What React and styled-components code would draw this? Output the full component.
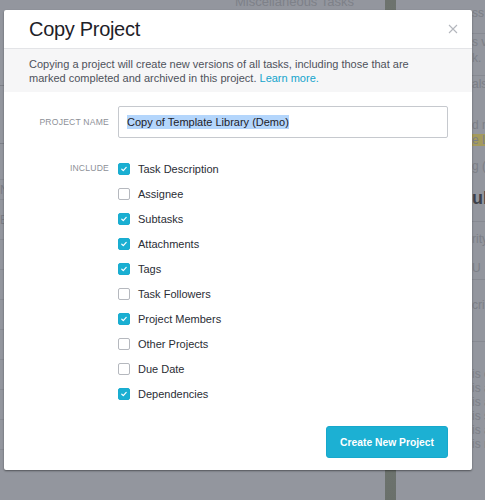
import React from "react";
import styled, { createGlobalStyle } from "styled-components";

const Global = createGlobalStyle`
  html, body { margin: 0; padding: 0; }
  body {
    width: 485px;
    height: 500px;
    overflow: hidden;
    background: #93969e;
    font-family: "Liberation Sans", Arial, sans-serif;
  }
`;

const Backdrop = styled.div`
  position: relative;
  width: 485px;
  height: 500px;
  display: flex;
  overflow: hidden;
  background: #93969e;
`;

const ListColumn = styled.div`
  width: 385px;
  flex-shrink: 0;
  display: flex;
  flex-direction: column;
`;

const ListHeader = styled.div`
  height: 86px;
  border-bottom: 1px solid #7d8088;
  padding: 0 0 0 235px;
  font-size: 13px;
  color: #7e8189;
  line-height: 16px;
  margin-top: -6px;
  box-sizing: border-box;
  height: 92px;
`;

const ListRow = styled.div`
  height: ${(p) => p.h}px;
  border-bottom: 1px solid ${(p) => (p.dark ? "#7d8088" : "#888b93")};
  box-sizing: border-box;
  font-size: 12px;
  color: #7a7d85;
  line-height: ${(p) => p.h}px;
`;

const Strip = styled.div`
  width: 11px;
  flex-shrink: 0;
  background: linear-gradient(180deg, #6d736e, #7a8079 60%, #6a706b);
`;

const SidePanel = styled.div`
  flex: 1;
  min-width: 0;
  overflow: hidden;
  display: flex;
  flex-direction: column;
  padding-left: 76px;
  font-size: 12px;
  color: #7c7f87;
`;

const SideLine = styled.div`
  flex-shrink: 0;
  height: ${(p) => p.h}px;
  line-height: ${(p) => p.h}px;
  box-sizing: border-box;
  white-space: nowrap;
  font-weight: ${(p) => (p.bold ? 700 : 400)};
  font-size: ${(p) => (p.big ? "18px" : "12px")};
  color: ${(p) => (p.bold ? "#3d4048" : "#7c7f87")};
  background: ${(p) => (p.badge ? "#a49a5c" : "transparent")};
  border-bottom: ${(p) => (p.rule ? "1px solid #878a92" : "none")};
  margin-left: ${(p) => (p.rule ? "-76px" : "0")};
  padding-left: ${(p) => (p.rule ? "76px" : "0")};
`;

const Modal = styled.div`
  position: absolute;
  left: 4px;
  top: 10px;
  width: 468px;
  background: #fff;
  border-radius: 2px;
  box-shadow: 0 1px 2px rgba(0, 0, 0, 0.45);
  display: flex;
  flex-direction: column;
`;

const Header = styled.div`
  height: 38px;
  border-bottom: 1px solid #e3e4e7;
  display: flex;
  align-items: center;
  justify-content: space-between;
  padding: 0 14px 0 25px;
`;

const Title = styled.h1`
  margin: 0;
  font-size: 20px;
  font-weight: 400;
  color: #1e2128;
  letter-spacing: -0.3px;
`;

const Close = styled.button`
  border: 0;
  background: none;
  padding: 0;
  width: 10px;
  height: 10px;
  display: flex;
  margin-top: -1px;
`;

const Band = styled.p`
  margin: 0;
  background: #f6f6f7;
  padding: 8px 25px 7px;
  font-size: 11px;
  line-height: 14px;
  color: #4e525b;
`;

const Link = styled.a`
  color: #14a4cc;
  text-decoration: none;
`;

const Form = styled.div`
  padding: 14px 24px 12px 25px;
  display: flex;
  flex-direction: column;
`;

const Field = styled.div`
  display: grid;
  grid-template-columns: 80px 1fr;
  column-gap: 9px;
  align-items: ${(p) => (p.top ? "start" : "center")};
  margin-top: ${(p) => p.mt || 0}px;
`;

const Label = styled.div`
  text-align: right;
  font-size: 8.6px;
  letter-spacing: 0.2px;
  color: #8d9097;
  text-transform: uppercase;
  line-height: ${(p) => (p.top ? "22px" : "normal")};
`;

const Input = styled.div`
  height: 32px;
  box-sizing: border-box;
  border: 1px solid #c6c9ce;
  border-radius: 2px;
  display: flex;
  align-items: center;
  padding-left: 8px;
  font-size: 11px;
  color: #1e2128;
`;

const Selected = styled.span`
  background: #b4d6fc;
  padding: 1px 0;
`;

const Options = styled.div`
  display: flex;
  flex-direction: column;
  margin-top: -1px;
`;

const Option = styled.label`
  height: 25px;
  display: flex;
  align-items: center;
  gap: 8px;
  font-size: 11px;
  color: #2a2d35;
`;

const Box = styled.span`
  width: 12px;
  height: 12px;
  box-sizing: border-box;
  border-radius: 2px;
  border: 1px solid ${(p) => (p.on ? "#19acd0" : "#b5b8be")};
  background: ${(p) => (p.on ? "#1aafd2" : "#fff")};
  display: flex;
  align-items: center;
  justify-content: center;
`;

const Footer = styled.div`
  display: flex;
  justify-content: flex-end;
  margin-top: 20px;
`;

const Button = styled.button`
  height: 32px;
  padding: 0 13px;
  border: 1px solid #17a8cc;
  border-radius: 3px;
  background: #1cb0d3;
  color: #fff;
  font-family: "Liberation Sans", Arial, sans-serif;
  font-size: 10.3px;
  font-weight: 700;
  width: 122px;
`;

const options = [
  ["Task Description", true],
  ["Assignee", false],
  ["Subtasks", true],
  ["Attachments", true],
  ["Tags", true],
  ["Task Followers", false],
  ["Project Members", true],
  ["Other Projects", false],
  ["Due Date", false],
  ["Dependencies", true],
];

const Check = () => (
  <svg width="8" height="8" viewBox="0 0 8 8">
    <path d="M1.8 4.2 L3.3 5.6 L6.2 2.4" fill="none" stroke="#fff" strokeWidth="1.2" strokeLinecap="round" strokeLinejoin="round" />
  </svg>
);

const sideLines = [
  { t: "ss", h: 26 },
  { t: "", h: 8, rule: true },
  { t: "s v", h: 16 },
  { t: "k.", h: 16 },
  { t: "", h: 10, rule: true },
  { t: "als", h: 16 },
  { t: "", h: 24 },
  { t: "d m", h: 18 },
  { t: "e L", h: 12, badge: true },
  { t: "", h: 12 },
  { t: "g (", h: 16 },
  { t: "", h: 12 },
  { t: "ub", h: 24, bold: true, big: true },
  { t: "", h: 12, rule: true },
  { t: "rity", h: 34 },
  { t: "U", h: 24, rule: true },
  { t: "", h: 14 },
  { t: "cri", h: 22 },
  { t: "", h: 26, rule: true },
  { t: "", h: 25 },
  { t: "is c", h: 14 },
  { t: "is a", h: 14 },
  { t: "is a", h: 14 },
  { t: "is s", h: 14 },
  { t: "is a", h: 14 },
  { t: "is r", h: 14 },
];

const listRows = [58, 36, 20, 40, 30, 30, 30, 30, 30, 30, 30];

export default function App() {
  return (
    <>
      <Global />
      <Backdrop>
        <ListColumn>
          <ListHeader>Miscellaneous Tasks</ListHeader>
          {listRows.map((h, i) => (
            <ListRow key={i} h={h} dark={i === 0}>
              {i === 2 ? "N" : i === 3 ? "E" : ""}
            </ListRow>
          ))}
        </ListColumn>
        <Strip />
        <SidePanel>
          {sideLines.map((l, i) => (
            <SideLine key={i} {...l}>
              {l.t}
            </SideLine>
          ))}
        </SidePanel>

        <Modal>
          <Header>
            <Title>Copy Project</Title>
            <Close aria-label="Close">
              <svg width="10" height="10" viewBox="0 0 10 10">
                <path d="M1 1 L9 9 M9 1 L1 9" stroke="#b4b7bd" strokeWidth="1.1" />
              </svg>
            </Close>
          </Header>
          <Band>
            Copying a project will create new versions of all tasks, including those that are
            <br />
            marked completed and archived in this project. <Link href="#">Learn more.</Link>
          </Band>
          <Form>
            <Field>
              <Label>Project Name</Label>
              <Input>
                <Selected>Copy of Template Library (Demo)</Selected>
              </Input>
            </Field>
            <Field top mt={19}>
              <Label top>Include</Label>
              <Options>
                {options.map(([name, on]) => (
                  <Option key={name}>
                    <Box on={on}>{on && <Check />}</Box>
                    {name}
                  </Option>
                ))}
              </Options>
            </Field>
            <Footer>
              <Button>Create New Project</Button>
            </Footer>
          </Form>
        </Modal>
      </Backdrop>
    </>
  );
}
